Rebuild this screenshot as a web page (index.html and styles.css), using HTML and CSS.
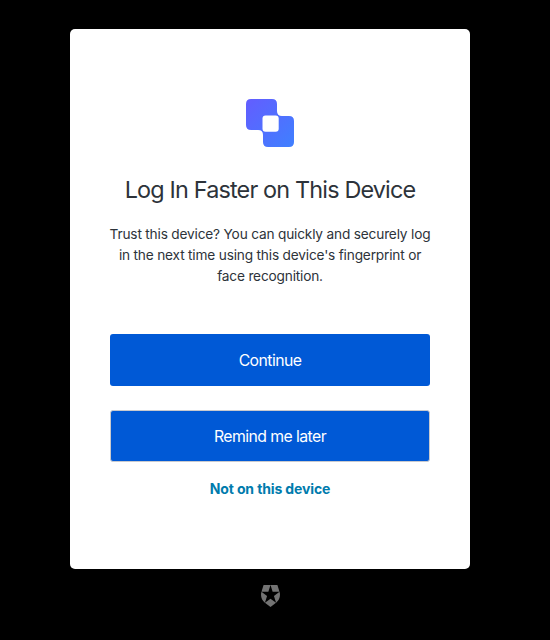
FILE: index.html
```html
<!DOCTYPE html>
<html lang="en">
<head>
<meta charset="utf-8">
<title>Log In Faster on This Device</title>
<link rel="stylesheet" href="styles.css">
</head>
<body>
<main class="card">
  <svg class="logo" width="48" height="48" viewBox="0 0 48 48" aria-hidden="true">
    <defs>
      <linearGradient id="brand" x1="0" y1="0" x2="1" y2="1">
        <stop offset="0" stop-color="#635dff"/>
        <stop offset="1" stop-color="#3f80ff"/>
      </linearGradient>
    </defs>
    <path fill="url(#brand)" d="M5 0H26Q31 0 31 5V12Q31 17 36 17H43Q48 17 48 22V43Q48 48 43 48H22Q17 48 17 43V36Q17 31 12 31H5Q0 31 0 26V5Q0 0 5 0Z"/>
    <rect x="16.5" y="16.5" width="16.2" height="16.2" rx="3" fill="#fff"/>
  </svg>
  <h1 class="title">Log In Faster on This Device</h1>
  <p class="description">Trust this device? You can quickly and securely log in the next time using this device's fingerprint or face recognition.</p>
  <button class="button button-primary" type="button">Continue</button>
  <button class="button button-secondary" type="button">Remind me later</button>
  <a class="link" href="#">Not on this device</a>
</main>
<footer class="footer">
  <svg width="19" height="22" viewBox="1.5 0 21 24" preserveAspectRatio="none" aria-hidden="true">
    <path fill="#737373" d="M21.98 7.448L19.62 0H4.347L2.02 7.448c-1.352 4.312.03 9.206 3.815 12.015L12.007 24l6.157-4.552c3.755-2.81 5.182-7.688 3.815-12.015l-6.16 4.58 2.343 7.45-6.157-4.597-6.158 4.58 2.358-7.433-6.188-4.55 7.63-.045L12.008 0l2.356 7.404 7.615.044z"/>
  </svg>
</footer>
</body>
</html>
```

FILE: styles.css
```css
* {
  box-sizing: border-box;
}

body {
  margin: 0;
  height: 640px;
  padding: 29px 10px 0 0;
  display: flex;
  flex-direction: column;
  align-items: center;
  overflow: hidden;
  background: #000;
  color: #2d333a;
  font-family: Inter, "Liberation Sans", sans-serif;
}

.card {
  display: flex;
  flex-direction: column;
  align-items: center;
  width: 400px;
  height: 540px;
  padding: 70px 40px 0;
  border-radius: 5px;
  background: #fff;
  text-align: center;
}

.logo {
  flex: none;
}

.title {
  margin: 28px 0 0;
  font-size: 23.4px;
  font-weight: 400;
  line-height: 30px;
  letter-spacing: -0.83px;
  white-space: nowrap;
}

.description {
  width: 324px;
  margin: 19px -2px 0;
  font-size: 13.7px;
  line-height: 21px;
  letter-spacing: -0.19px;
}

.button {
  flex: none;
  width: 320px;
  height: 52px;
  padding: 1px 0 0;
  border: 0;
  border-radius: 3px;
  background: #0059d6;
  color: #fff;
  font: 400 15.8px/21px Inter, "Liberation Sans", sans-serif;
  letter-spacing: -0.56px;
}

.button-primary {
  margin-top: 47px;
}

.button-secondary {
  margin-top: 24px;
  border: 1px solid #c9cace;
}

.link {
  margin-top: 17px;
  color: #007bad;
  font-size: 14px;
  font-weight: 700;
  line-height: 20px;
  letter-spacing: -0.12px;
  text-decoration: none;
}

.footer {
  display: flex;
  margin: 16px 0 0 1px;
}
```
